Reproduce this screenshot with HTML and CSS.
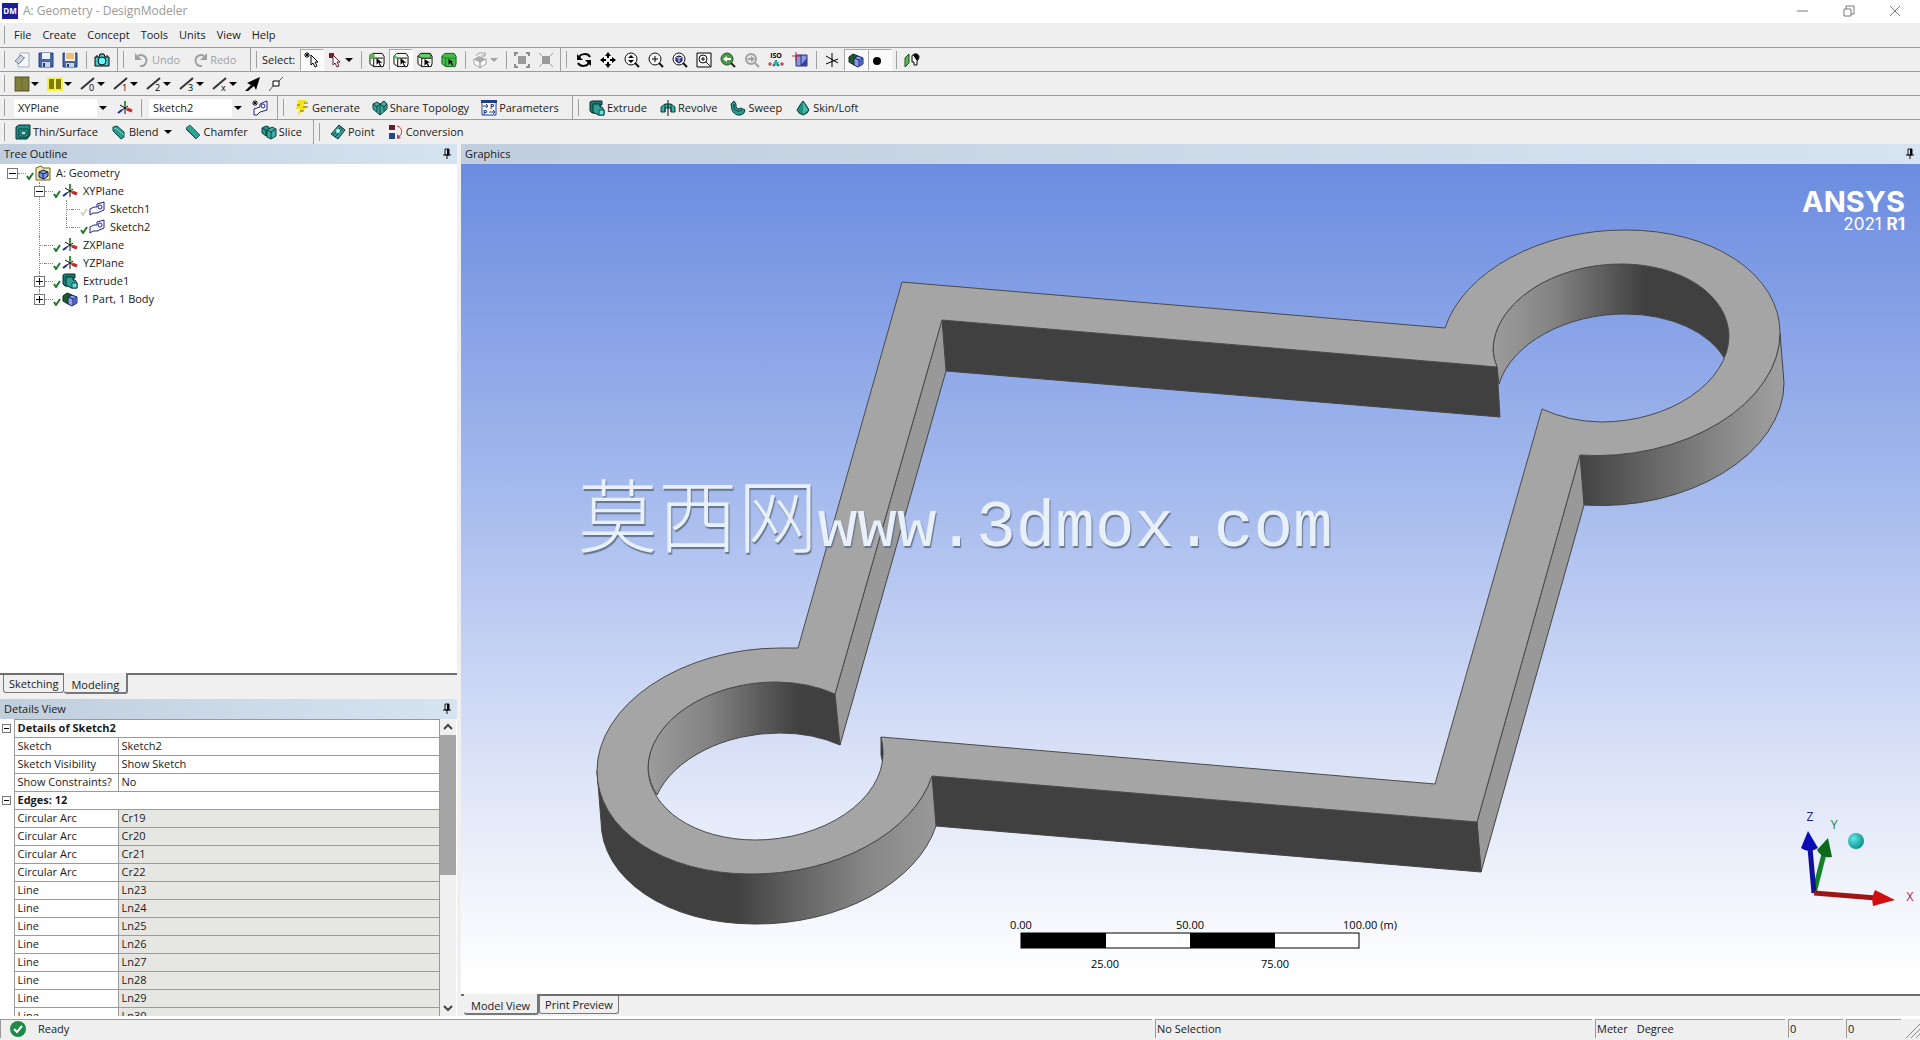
FILE: index.html
```
<!DOCTYPE html>
<html lang="en">

<head>
    <meta charset="UTF-8">
    <meta name="viewport" content="width=device-width, initial-scale=1.0">
    <title>A: Geometry - DesignModeler</title>
    <link rel="stylesheet" href="styles.css">
</head>

<body>
    <!-- Icon sprite -->
    <svg class="sprite" aria-hidden="true">
        <symbol id="i-new" viewBox="0 0 16 16"><path d="M6 1h9v14H4V8z" fill="#f4f6fa" stroke="#a9afba"/><path d="M1 9l6-6 3 3-5 6z" fill="#cdd3de" stroke="#7b8494"/><path d="M5 12l6-7" stroke="#99a" /></symbol>
        <symbol id="i-save" viewBox="0 0 16 16"><path d="M1 1h14v14H1z" fill="#4668a8" stroke="#20407c"/><path d="M4 1h8v6H4z" fill="#eef3fb"/><path d="M4 10h8v5H4z" fill="#c9d3e6"/><path d="M5 11h2v4H5z" fill="#20407c"/></symbol>
        <symbol id="i-saveas" viewBox="0 0 16 16"><path d="M1 1h14v14H1z" fill="#4668a8" stroke="#20407c"/><path d="M3 0h10v9H3z" fill="#fff4d8"/><path d="M4 2h8M4 4h8M4 6h8" stroke="#d8862c"/><path d="M4 11h8v4H4z" fill="#c9d3e6"/><path d="M5 12h2v3H5z" fill="#20407c"/></symbol>
        <symbol id="i-camera" viewBox="0 0 16 16"><path d="M1 5h4l1-3h4l1 3h4v9H1z" fill="#55c6d0" stroke="#000"/><circle cx="8" cy="9" r="4" fill="#60ffff" stroke="#000"/><path d="M3 3v2M13 3v2" stroke="#000"/></symbol>
        <symbol id="i-undo" viewBox="0 0 16 16"><path d="M4 4a5.500 5.500 0 1 1 2 10" fill="none" stroke="#a0a0a0" stroke-width="2"/><path d="M1 1v7h7z" fill="#a0a0a0"/></symbol>
        <symbol id="i-redo" viewBox="0 0 16 16"><path d="M12 4a5.500 5.500 0 1 0-2 10" fill="none" stroke="#a0a0a0" stroke-width="2"/><path d="M15 1v7H8z" fill="#a0a0a0"/></symbol>
        <symbol id="i-cursor" viewBox="0 0 16 16"><path d="M3 0v6M0 3h6M1 1l4 4M5 1L1 5" stroke="#000"/><path d="M7 3v10l2-2 2 4 2-1-2-4h3z" fill="#fff" stroke="#000"/></symbol>
        <symbol id="i-pick" viewBox="0 0 16 16"><path d="M1 1h5v5H1z" fill="#7a1730"/><path d="M5 3v10l2-2 2 4 2-1-2-4h3z" fill="#fff" stroke="#5c1a2a"/></symbol>
        <g id="cube-lines"><path d="M1 4l3-3h10l2 3v8l-1 3H5l-4-3z" fill="#f6f6f2" stroke="#000"/><path d="M1 4l4 2h10M5 6v9" stroke="#000" fill="none"/></g>
        <symbol id="i-vertex" viewBox="0 0 17 16"><use href="#cube-lines"/><circle cx="3" cy="4" r="3" fill="#5fae55"/><path d="M8 6v7l2-2 2 4 1-1-2-3h3z"/></symbol>
        <symbol id="i-edge" viewBox="0 0 17 16"><use href="#cube-lines"/><path d="M1 4l4 2" stroke="#4dbb4d" stroke-width="2"/><path d="M8 6v7l2-2 2 4 1-1-2-3h3z"/></symbol>
        <symbol id="i-face" viewBox="0 0 17 16"><use href="#cube-lines"/><path d="M1 4l3-3h10l1 5H5z" fill="#5fd05f" stroke="#000" stroke-width=".6"/><path d="M8 7v7l2-2 2 3 1-1-2-3h3z"/></symbol>
        <symbol id="i-body" viewBox="0 0 17 16"><path d="M1 4l3-3h10l2 3v8l-1 3H5l-4-3z" fill="#45bd4a" stroke="#0b5a14"/><path d="M1 4l4 2h10M5 6v9" stroke="#0b5a14" fill="none" stroke-width=".7"/><path d="M8 7v6l2-2 2 3 1-1-2-3h2z"/></symbol>
        <symbol id="i-graycube" viewBox="0 0 16 16"><path d="M1 7l6 3v6l-6-4zM7 10l6-3v5l-6 4z" fill="#fff" stroke="#a0a0a0"/><path d="M1 7l5-3 7 3-6 3z" fill="#aaa"/><path d="M3 4c2-4 7-4 9-1M12 0v4H8" fill="none" stroke="#a0a0a0"/></symbol>
        <symbol id="i-expand" viewBox="0 0 16 16"><path d="M4 4h8v8H4z" fill="#9a9a9a"/><path d="M1 4V1h3M12 1h3v3M15 12v3h-3M4 15H1v-3" fill="none" stroke="#8c8c8c" stroke-width="2"/></symbol>
        <symbol id="i-shrink" viewBox="0 0 16 16"><path d="M4 4h8v8H4z" fill="#9a9a9a"/><path d="M1 1l3 3M15 1l-3 3M15 15l-3-3M1 15l3-3" stroke="#9a9a9a" stroke-width="1"/></symbol>
        <symbol id="i-rotate" viewBox="0 0 16 16"><path d="M3 6c1-5 9-5 11-1M13 10c-1 5-9 5-11 1" fill="none" stroke="#000" stroke-width="2"/><path d="M1 2v6h6zM15 14V8H9z"/></symbol>
        <symbol id="i-pan" viewBox="0 0 16 16"><path d="M8 3v3M8 10v3M3 8h3M10 8h3" stroke="#000" stroke-width="2"/><path d="M8 0l3 4H5zM8 16l3-4H5zM0 8l4-3v6zM16 8l-4-3v6z"/></symbol>
        <g id="lens"><circle cx="7" cy="7" r="6" fill="#f6f6f6" stroke="#111"/><path d="M11 11l4 4" stroke="#111" stroke-width="2"/></g>
        <symbol id="i-zoom" viewBox="0 0 16 16"><use href="#lens"/><path d="M7 3l3 3H4zM7 11l3-3H4z"/></symbol>
        <symbol id="i-zoomin" viewBox="0 0 16 16"><use href="#lens"/><path d="M7 4v6M4 7h6" stroke="#000" stroke-width="1"/></symbol>
        <symbol id="i-fit" viewBox="0 0 16 16"><use href="#lens"/><path d="M4 5l3-1 3 1v4l-3 2-3-2z" fill="#4a4ab0" stroke="#113"/><path d="M4 5l3 1 3-1M7 6v4" stroke="#cfd0ff" fill="none"/></symbol>
        <symbol id="i-box" viewBox="0 0 16 16"><path d="M1 1h14v14H1z" fill="#f6f6f6" stroke="#000"/><circle cx="7" cy="7" r="4" fill="none" stroke="#111"/><path d="M10 10l4 4M7 5v4M5 7h4" stroke="#111"/></symbol>
        <symbol id="i-prev" viewBox="0 0 16 16"><circle cx="7" cy="7" r="6" fill="#4a9b48" stroke="#1f5a22"/><path d="M11 11l4 4" stroke="#222" stroke-width="2"/><path d="M3 7l4-3v2h4v2H7v2z" fill="#fff"/></symbol>
        <symbol id="i-next" viewBox="0 0 16 16"><circle cx="7" cy="7" r="5" fill="#e6e6e6" stroke="#a0a0a0" stroke-width="2"/><path d="M11 11l4 4" stroke="#a0a0a0" stroke-width="2"/><path d="M11 7L7 4v2H4v2h3v2z" fill="#a0a0a0"/></symbol>
        <symbol id="i-lookat" viewBox="0 0 16 16"><path d="M4 3h11v11H4z" fill="#8a98e0" stroke="#2b2f80"/><path d="M8 14l7-8v8z" fill="#34409a"/><path d="M4 0v9M0 4h9" stroke="#b03040"/><path d="M9 3v11" stroke="#2b2f80"/></symbol>
        <symbol id="i-blackaxis" viewBox="0 0 16 16"><path d="M8 1v14M2 4l12 7M2 12l12-5" stroke="#000"/></symbol>
        <symbol id="i-parts" viewBox="0 0 16 16"><path d="M1 5l4-3 5 2v7l-4 2-5-3z" fill="#1d5a2c" stroke="#0b2a12"/><path d="M6 6l4-2 5 2v6l-5 3-4-2z" fill="#8aa0ea" stroke="#14205a"/><path d="M6 6l5 2 4-2M11 8v6" fill="none" stroke="#14205a"/><path d="M11 8l4-2v6l-4 2z" fill="#4a5fc0"/></symbol>
        <symbol id="i-dot" viewBox="0 0 16 16"><circle cx="5" cy="9" r="4"/></symbol>
        <symbol id="i-headview" viewBox="0 0 16 16"><path d="M1 6l4-4v9l-4 4z" fill="#5cb75c" stroke="#184a18"/><path d="M8 4c1-3 7-3 7 1 0 3-2 3-2 5v3h-3v-3H8V7z" fill="#fff" stroke="#000"/><path d="M9 3c2-2 6-1 6 2l-2 4-2-3z"/></symbol>
        <symbol id="i-olive" viewBox="0 0 14 14"><path d="M1 1h12v12H1z" fill="#80803c" stroke="#55551f"/><path d="M7 1v12" stroke="#6b6b2c"/></symbol>
        <symbol id="i-yellow" viewBox="0 0 16 16"><path d="M0 1h16v14H0z" fill="#f4f43c"/><path d="M2 3h5v10H2zM9 3h5v10H9z" fill="#7d7a12"/></symbol>
        <symbol id="i-line" viewBox="0 0 16 16"><path d="M1 13L14 2" stroke="#333" stroke-width="2"/></symbol>
        <symbol id="i-arrow" viewBox="0 0 16 16"><path d="M0 15l6-6-4-2 13-6-4 13-2-4-6 5z"/></symbol>
        <symbol id="i-node" viewBox="0 0 16 16"><path d="M4 5h6v5H4z" fill="#fff" stroke="#000"/><path d="M10 5l4-4M4 10l-4 5" stroke="#555"/></symbol>
        <symbol id="i-axis" viewBox="0 0 16 16"><path d="M8 14V4M3 5l10 6M2 12l9-6" stroke="#111" stroke-width="1"/><path d="M8 6V1" stroke="#2c9a3a" stroke-width="2"/><path d="M10 9l5 2" stroke="#c22c2c" stroke-width="3"/><path d="M1 13l4-3" stroke="#202a90" stroke-width="2"/></symbol>
        <symbol id="i-newsketch" viewBox="0 0 16 16"><path d="M3 0v6M0 3h6M1 1l4 4M5 1L1 5" stroke="#111"/><path d="M2 15V9l6-2V4l7-3v9l-7 2-3 3z" fill="#fff" stroke="#20208a"/><circle cx="11" cy="6" r="2" fill="none" stroke="#20208a"/></symbol>
        <symbol id="i-sketch" viewBox="0 0 16 16"><path d="M1 14V8l4-2h3V3l7-2v8l-7 3H4z" fill="#fff" stroke="#20208a"/><circle cx="11" cy="6" r="2" fill="none" stroke="#20208a"/></symbol>
        <symbol id="i-generate" viewBox="0 0 16 16"><path d="M4 0h9L9 6h5L3 16l3-7H2z" fill="#f5e11c"/><path d="M10 3h4M9 7h5M6 11h4M3 5h3" stroke="#776a10"/></symbol>
        <symbol id="i-share" viewBox="0 0 16 16"><path d="M1 4l4-2 3 2 4-3 3 3v5l-7 6-7-6z" fill="#3fa79d" stroke="#0c3f3c"/><path d="M8 4v11M1 4l4 3 3-3 4 3 3-3M5 7v5M12 7v4" fill="none" stroke="#0c3f3c"/></symbol>
        <symbol id="i-extrude" viewBox="0 0 16 16"><path d="M1 2l2-1h10v4h-2v8H3l-2-2z" fill="#1b7a72" stroke="#082f2d"/><path d="M4 4h7v3h2l2 3v5H9l-3-2H4z" fill="#2fa096" stroke="#082f2d"/><path d="M10 10h5v5h-5z" fill="#66e0dc" stroke="#0b4a4a"/></symbol>
        <symbol id="i-revolve" viewBox="0 0 16 16"><path d="M1 12V7l4-3h6l4 3v5h-4V8H5v4z" fill="#3fb0a5" stroke="#083f3c"/><path d="M8 0v16" stroke="#111"/><path d="M5 8v4M11 8v4M5 4v4M11 4v4" stroke="#083f3c"/></symbol>
        <symbol id="i-sweep" viewBox="0 0 16 16"><path d="M1 4l3-3 2 3v3c1 2 3 2 5 1l4 2-1 3c-4 4-10 2-12-3z" fill="#2c9c92" stroke="#083f3c"/><path d="M4 4v4c1 3 4 4 8 2" fill="none" stroke="#083f3c"/></symbol>
        <symbol id="i-skin" viewBox="0 0 16 16"><path d="M8 1l3 4 3 5-2 3-4 2-4-2-2-3 3-5z" fill="#1f8f80" stroke="#083f3c"/><path d="M8 2v12l5-4-3-5z" fill="#48b8a6"/></symbol>
        <symbol id="i-thin" viewBox="0 0 16 16"><path d="M1 3l3-2h11v10l-3 4H1z" fill="#1f8f86" stroke="#082f2d"/><path d="M4 5h9v8H4z" fill="#2fb3a8" stroke="#082f2d"/><path d="M6 7h5v4H6z" fill="#9bdfd8" stroke="#082f2d"/></symbol>
        <symbol id="i-blend" viewBox="0 0 16 16"><path d="M2 3l4-1 7 6v5l-3 2-8-8z" fill="#2a9a90" stroke="#0b4a46"/><path d="M3 4l3 1 7 6" fill="none" stroke="#7fd6cf"/></symbol>
        <symbol id="i-chamfer" viewBox="0 0 16 16"><path d="M1 4l4-3 10 10-4 4z" fill="#2aa396" stroke="#2f6a66"/><path d="M1 5l10 10" stroke="#0b4a46"/></symbol>
        <symbol id="i-slice" viewBox="0 0 16 16"><path d="M1 4l4-2 3 1v8l-3 1-4-3z" fill="#2c9c92" stroke="#083f3c"/><path d="M6 6l5-3 4 2v7l-5 3-4-2z" fill="#3fb0a5" stroke="#083f3c"/><path d="M6 6l4 2 5-3M10 8v7M1 4l4 2v5" fill="none" stroke="#083f3c"/></symbol>
        <symbol id="i-point" viewBox="0 0 16 16"><path d="M9 1l6 5-7 9-7-5z" fill="#3a9a90" stroke="#0c3f3c"/><path d="M3 11l8-8M5 13l8-9" stroke="#0c3f3c"/><circle cx="8" cy="7" r="2" fill="#bff"/></symbol>
        <symbol id="i-conv" viewBox="0 0 16 16"><path d="M1 1h6v5H1z" fill="#6a1b2e"/><path d="M1 9h6v6H1z" fill="#214a80"/><path d="M9 2c6 1 6 9 1 11" fill="none" stroke="#c23a4a"/><path d="M9 10v5l4-1z" fill="#c23a4a"/></symbol>
        <symbol id="i-root" viewBox="0 0 16 16"><path d="M1 3l5-2 2 2h7v12H1z" fill="#f3e9a0" stroke="#6b6320"/><path d="M4 7l4-2 5 2v4l-4 3-5-2z" fill="#7c96e0" stroke="#14205a"/><path d="M4 7l4 2 5-2M8 9v5" fill="none" stroke="#14205a"/></symbol>
        <symbol id="i-check" viewBox="0 0 8 8"><path d="M1 4l2 3 4-6" fill="none" stroke="currentColor" stroke-width="2"/></symbol>
        <symbol id="i-pin" viewBox="0 0 8 12"><path d="M2 1h4v6H2zM0 7h8M4 7v4" fill="none" stroke="#111"/><path d="M4 1h2v6H4z"/></symbol>
    </svg>

    <header class="titlebar">
        <svg class="app-icon" viewBox="0 0 16 16"><rect width="16" height="16" fill="#1c1c9c"/><text class="app-text" x="8" y="11" text-anchor="middle">DM</text></svg>
        <h1>A: Geometry - DesignModeler</h1>
        <div class="window-buttons">
            <button aria-label="Minimize"><svg viewBox="0 0 12 12"><path d="M0 6h11" stroke="#777"/></svg></button>
            <button aria-label="Restore"><svg viewBox="0 0 12 12"><path d="M1 4h7v7H1zM3 4V1h8v8H8" fill="none" stroke="#777"/></svg></button>
            <button aria-label="Close"><svg viewBox="0 0 12 12"><path d="M1 1l10 10M11 1L1 11" stroke="#777"/></svg></button>
        </div>
    </header>

    <!-- Menu and toolbars -->
    <nav class="bar menu">
        <button>File</button>
        <button>Create</button>
        <button>Concept</button>
        <button>Tools</button>
        <button>Units</button>
        <button>View</button>
        <button>Help</button>
    </nav>

    <div class="bar">
        <div class="band band-file">
            <button class="icon-btn" aria-label="New"><svg><use href="#i-new"/></svg></button>
            <button class="icon-btn" aria-label="Save"><svg><use href="#i-save"/></svg></button>
            <button class="icon-btn" aria-label="Save as"><svg><use href="#i-saveas"/></svg></button>
            <span class="sep"></span>
            <button class="icon-btn" aria-label="Image capture"><svg><use href="#i-camera"/></svg></button>
        </div>
        <div class="band band-undo">
            <button class="tool" disabled><svg><use href="#i-undo"/></svg>Undo</button>
            <button class="tool" disabled><svg><use href="#i-redo"/></svg>Redo</button>
        </div>
        <div class="band band-select">
            <span class="select-label">Select:</span>
            <button class="icon-btn pressed" aria-label="New selection"><svg><use href="#i-cursor"/></svg></button>
            <button class="icon-btn drop" aria-label="Select mode"><svg><use href="#i-pick"/></svg></button>
            <span class="sep"></span>
            <button class="icon-btn" aria-label="Vertices"><svg><use href="#i-vertex"/></svg></button>
            <button class="icon-btn pressed" aria-label="Edges"><svg><use href="#i-edge"/></svg></button>
            <button class="icon-btn" aria-label="Faces"><svg><use href="#i-face"/></svg></button>
            <button class="icon-btn" aria-label="Bodies"><svg><use href="#i-body"/></svg></button>
            <span class="sep"></span>
            <button class="icon-btn drop" aria-label="Extend selection" disabled><svg><use href="#i-graycube"/></svg></button>
            <span class="sep"></span>
            <button class="icon-btn" aria-label="Expand" disabled><svg><use href="#i-expand"/></svg></button>
            <button class="icon-btn" aria-label="Shrink" disabled><svg><use href="#i-shrink"/></svg></button>
        </div>
        <div class="band band-last">
            <button class="icon-btn" aria-label="Rotate"><svg><use href="#i-rotate"/></svg></button>
            <button class="icon-btn" aria-label="Pan"><svg><use href="#i-pan"/></svg></button>
            <button class="icon-btn" aria-label="Zoom"><svg><use href="#i-zoom"/></svg></button>
            <button class="icon-btn" aria-label="Box zoom"><svg><use href="#i-zoomin"/></svg></button>
            <button class="icon-btn" aria-label="Zoom to fit"><svg><use href="#i-fit"/></svg></button>
            <button class="icon-btn" aria-label="Magnifier"><svg><use href="#i-box"/></svg></button>
            <button class="icon-btn" aria-label="Previous view"><svg><use href="#i-prev"/></svg></button>
            <button class="icon-btn" aria-label="Next view" disabled><svg><use href="#i-next"/></svg></button>
            <button class="icon-btn" aria-label="Isometric view"><svg viewBox="0 0 16 16"><text class="iso-text" x="8" y="6" text-anchor="middle">ISO</text><path d="M8 8v3l-3 3M8 11l3 3" stroke="#0a7a72" stroke-width="2" fill="none"/><path d="M0 12h4M2 10v4M12 12h4M14 10v4" stroke="#a22"/><path d="M8 8l3 3-3 3-3-3z" fill="#39b0a5"/></svg></button>
            <button class="icon-btn" aria-label="Look at"><svg><use href="#i-lookat"/></svg></button>
            <span class="sep"></span>
            <button class="icon-btn" aria-label="Display plane"><svg><use href="#i-blackaxis"/></svg></button>
            <button class="icon-btn pressed" aria-label="Display model"><svg><use href="#i-parts"/></svg></button>
            <button class="icon-btn pressed" aria-label="Display points"><svg><use href="#i-dot"/></svg></button>
            <span class="sep"></span>
            <button class="icon-btn" aria-label="Look at face"><svg><use href="#i-headview"/></svg></button>
        </div>
    </div>

    <div class="bar">
        <div class="band band-last">
            <button class="icon-btn drop" aria-label="Face color"><svg><use href="#i-olive"/></svg></button>
            <button class="icon-btn drop" aria-label="Edge color"><svg><use href="#i-yellow"/></svg></button>
            <button class="icon-btn drop" aria-label="Free edges"><svg viewBox="0 0 16 16"><use href="#i-line"/><text class="edge-num" x="9" y="15">0</text></svg></button>
            <button class="icon-btn drop" aria-label="Single edges"><svg viewBox="0 0 16 16"><use href="#i-line"/><text class="edge-num" x="9" y="15">1</text></svg></button>
            <button class="icon-btn drop" aria-label="Double edges"><svg viewBox="0 0 16 16"><use href="#i-line"/><text class="edge-num" x="9" y="15">2</text></svg></button>
            <button class="icon-btn drop" aria-label="Triple edges"><svg viewBox="0 0 16 16"><use href="#i-line"/><text class="edge-num" x="9" y="15">3</text></svg></button>
            <button class="icon-btn drop" aria-label="Multiple edges"><svg viewBox="0 0 16 16"><use href="#i-line"/><text class="edge-num" x="9" y="15">x</text></svg></button>
            <button class="icon-btn" aria-label="Edge direction"><svg><use href="#i-arrow"/></svg></button>
            <button class="icon-btn" aria-label="Show vertices"><svg><use href="#i-node"/></svg></button>
        </div>
    </div>

    <div class="bar">
        <div class="band band-plane">
            <span class="combo"><select aria-label="Active plane"><option>XYPlane</option><option>ZXPlane</option><option>YZPlane</option></select></span>
            <button class="icon-btn" aria-label="New plane"><svg><use href="#i-axis"/></svg></button>
            <span class="sep"></span>
            <span class="combo"><select aria-label="Active sketch"><option>Sketch2</option><option>Sketch1</option></select></span>
            <button class="icon-btn" aria-label="New sketch"><svg><use href="#i-newsketch"/></svg></button>
        </div>
        <div class="band band-generate">
            <button class="tool"><svg><use href="#i-generate"/></svg>Generate</button>
            <button class="tool"><svg><use href="#i-share"/></svg>Share Topology</button>
            <button class="tool"><svg viewBox="0 0 16 16"><path d="M1 1h14v14H1z" fill="#fff" stroke="#1e3c8c"/><path d="M0 0h16v3H0z" fill="#1e3c8c"/><text class="param-text" x="9" y="9">P</text><text class="param-text" x="2" y="15">P</text><path d="M2 6h5M8 12h5M5 4l2 2-2 2M12 10l2 2-2 2" stroke="#1e3c8c" fill="none"/></svg>Parameters</button>
        </div>
        <div class="band band-last band-features">
            <button class="tool"><svg><use href="#i-extrude"/></svg>Extrude</button>
            <button class="tool"><svg><use href="#i-revolve"/></svg>Revolve</button>
            <button class="tool"><svg><use href="#i-sweep"/></svg>Sweep</button>
            <button class="tool"><svg><use href="#i-skin"/></svg>Skin/Loft</button>
        </div>
    </div>

    <div class="bar bar-bottom">
        <div class="band band-thin">
            <button class="tool"><svg><use href="#i-thin"/></svg>Thin/Surface</button>
            <button class="tool drop"><svg><use href="#i-blend"/></svg>Blend</button>
            <button class="tool"><svg><use href="#i-chamfer"/></svg>Chamfer</button>
            <button class="tool"><svg><use href="#i-slice"/></svg>Slice</button>
        </div>
        <div class="band band-last band-features">
            <button class="tool"><svg><use href="#i-point"/></svg>Point</button>
            <button class="tool"><svg><use href="#i-conv"/></svg>Conversion</button>
        </div>
    </div>

    <main class="workspace">
        <aside class="sidebar">
            <!-- Tree Outline -->
            <div class="pane-title"><h2>Tree Outline</h2><svg><use href="#i-pin"/></svg></div>
            <div class="tree">
                <ul class="root">
                    <li>
                        <div class="node"><button class="toggle" aria-label="Collapse"></button><i class="dots"></i><svg class="check"><use href="#i-check"/></svg><svg><use href="#i-root"/></svg><span>A: Geometry</span></div>
                        <ul>
                            <li>
                                <div class="node"><button class="toggle" aria-label="Collapse"></button><i class="dots"></i><svg class="check"><use href="#i-check"/></svg><svg><use href="#i-axis"/></svg><span>XYPlane</span></div>
                                <ul>
                                    <li><div class="node"><i class="stub"></i><i class="dots"></i><svg class="check faded"><use href="#i-check"/></svg><svg><use href="#i-sketch"/></svg><span>Sketch1</span></div></li>
                                    <li><div class="node"><i class="stub"></i><i class="dots"></i><svg class="check"><use href="#i-check"/></svg><svg><use href="#i-sketch"/></svg><span>Sketch2</span></div></li>
                                </ul>
                            </li>
                            <li><div class="node"><i class="stub"></i><i class="dots"></i><svg class="check"><use href="#i-check"/></svg><svg><use href="#i-axis"/></svg><span>ZXPlane</span></div></li>
                            <li><div class="node"><i class="stub"></i><i class="dots"></i><svg class="check"><use href="#i-check"/></svg><svg><use href="#i-axis"/></svg><span>YZPlane</span></div></li>
                            <li><div class="node"><button class="toggle closed" aria-label="Expand"></button><i class="dots"></i><svg class="check"><use href="#i-check"/></svg><svg><use href="#i-extrude"/></svg><span>Extrude1</span></div></li>
                            <li><div class="node"><button class="toggle closed" aria-label="Expand"></button><i class="dots"></i><svg class="check"><use href="#i-check"/></svg><svg><use href="#i-parts"/></svg><span>1 Part, 1 Body</span></div></li>
                        </ul>
                    </li>
                </ul>
            </div>
            <div class="tabs tree-tabs">
                <button>Sketching</button>
                <button class="active">Modeling</button>
            </div>

            <!-- Details View -->
            <div class="pane-title"><h2>Details View</h2><svg><use href="#i-pin"/></svg></div>
            <div class="details">
                <table>
                    <tbody>
                        <tr><td class="gutter"><button class="toggle" aria-label="Collapse"></button></td><th colspan="2">Details of Sketch2</th></tr>
                        <tr><td class="gutter"></td><td class="name">Sketch</td><td>Sketch2</td></tr>
                        <tr><td class="gutter"></td><td class="name">Sketch Visibility</td><td>Show Sketch</td></tr>
                        <tr><td class="gutter"></td><td class="name">Show Constraints?</td><td>No</td></tr>
                    </tbody>
                    <tbody class="readonly">
                        <tr><td class="gutter"><button class="toggle" aria-label="Collapse"></button></td><th colspan="2">Edges: 12</th></tr>
                        <tr><td class="gutter"></td><td class="name">Circular Arc</td><td>Cr19</td></tr>
                        <tr><td class="gutter"></td><td class="name">Circular Arc</td><td>Cr20</td></tr>
                        <tr><td class="gutter"></td><td class="name">Circular Arc</td><td>Cr21</td></tr>
                        <tr><td class="gutter"></td><td class="name">Circular Arc</td><td>Cr22</td></tr>
                        <tr><td class="gutter"></td><td class="name">Line</td><td>Ln23</td></tr>
                        <tr><td class="gutter"></td><td class="name">Line</td><td>Ln24</td></tr>
                        <tr><td class="gutter"></td><td class="name">Line</td><td>Ln25</td></tr>
                        <tr><td class="gutter"></td><td class="name">Line</td><td>Ln26</td></tr>
                        <tr><td class="gutter"></td><td class="name">Line</td><td>Ln27</td></tr>
                        <tr><td class="gutter"></td><td class="name">Line</td><td>Ln28</td></tr>
                        <tr><td class="gutter"></td><td class="name">Line</td><td>Ln29</td></tr>
                        <tr><td class="gutter"></td><td class="name">Line</td><td>Ln30</td></tr>
                    </tbody>
                </table>
                <div class="scrollbar">
                    <button aria-label="Scroll up"><svg viewBox="0 0 10 10"><path d="M1 7l4-4 4 4" fill="none" stroke="#444" stroke-width="2"/></svg></button>
                    <div class="track"><div class="thumb"></div></div>
                    <button aria-label="Scroll down"><svg viewBox="0 0 10 10"><path d="M1 3l4 4 4-4" fill="none" stroke="#444" stroke-width="2"/></svg></button>
                </div>
            </div>
        </aside>

        <section class="graphics">
            <div class="pane-title"><h2>Graphics</h2><svg><use href="#i-pin"/></svg></div>
            <div class="viewport">
                <svg class="model" viewBox="461 164 1459 830">
                    <defs>
                        <linearGradient id="g-hole1" gradientUnits="userSpaceOnUse" x1="1493" y1="0" x2="1645" y2="0"><stop offset="0" stop-color="#9c9c9c"/><stop offset=".4" stop-color="#838383"/><stop offset=".8" stop-color="#555"/><stop offset="1" stop-color="#404040"/></linearGradient>
                        <linearGradient id="g-hole2" gradientUnits="userSpaceOnUse" x1="648" y1="0" x2="800" y2="0"><stop offset="0" stop-color="#9c9c9c"/><stop offset=".4" stop-color="#838383"/><stop offset=".8" stop-color="#555"/><stop offset="1" stop-color="#404040"/></linearGradient>
                        <linearGradient id="g-ring1" gradientUnits="userSpaceOnUse" x1="1583" y1="0" x2="1784" y2="0"><stop offset="0" stop-color="#444"/><stop offset=".3" stop-color="#626262"/><stop offset=".65" stop-color="#848484"/><stop offset="1" stop-color="#a0a0a0"/></linearGradient>
                        <linearGradient id="g-ring2" gradientUnits="userSpaceOnUse" x1="735" y1="0" x2="936" y2="0"><stop offset="0" stop-color="#404040"/><stop offset=".3" stop-color="#626262"/><stop offset=".65" stop-color="#868686"/><stop offset="1" stop-color="#999"/></linearGradient>
                        <radialGradient id="g-ball" cx=".35" cy=".35" r=".7"><stop offset="0" stop-color="#5fe8e4"/><stop offset="1" stop-color="#0a8f90"/></radialGradient>
                    </defs>
                    <!-- side walls -->
                    <g stroke="#444" stroke-width="1" stroke-linejoin="round">
                        <path fill="url(#g-hole1)" d="M1497 367A118 79 -6 0 1 1493 350A118 79 -6 0 1 1622 264A118 79 -6 0 1 1729 336A118 79 -6 0 1 1725 359A118 79 -6 0 0 1626 314A118 79 -6 0 0 1499 384Z"/>
                        <path fill="#404040" d="M942 320L1497 367L1500 417L946 371Z"/>
                        <path fill="url(#g-hole2)" d="M657 795A118 79 -6 0 1 648 768A118 79 -6 0 1 776 682A118 79 -6 0 1 835 694L840 745A118 79 -6 0 0 780 733A118 79 -6 0 0 657 795Z"/>
                        <path fill="#999" d="M942 320L835 694L840 745L946 371Z"/>
                        <path fill="#303030" d="M881 737A118 79 -6 0 1 883 764L881 755Z"/>
                        <path fill="url(#g-ring1)" d="M1580 455A169 112 -6 0 0 1780 333L1784 383A169 112 -6 0 1 1584 505Z"/>
                        <path fill="#999" d="M1580 455L1477 822L1481 872L1584 505Z"/>
                        <path fill="#404040" d="M932 776L1477 822L1481 872L936 826Z"/>
                        <path fill="url(#g-ring2)" d="M597 771A169 112 -6 0 0 750 874A169 112 -6 0 0 932 776L936 826A169 112 -6 0 1 754 924A169 112 -6 0 1 601 821Z"/>
                    </g>
                    <!-- top face -->
                    <path fill="#a5a5a5" fill-rule="evenodd" stroke="#4a4a4a" stroke-width="1" d="M902 282L1445 328A169 112 -6 0 1 1626 230A169 112 -6 0 1 1780 333A169 112 -6 0 1 1580 455L1477 822L932 776A169 112 -6 0 1 750 874A169 112 -6 0 1 597 771A169 112 -6 0 1 780 648L798 648Z
                        M942 320L1497 367A118 79 -6 0 1 1493 350A118 79 -6 0 1 1622 264A118 79 -6 0 1 1729 336A118 79 -6 0 1 1601 422A118 79 -6 0 1 1542 409L1435 784L881 737A118 79 -6 0 1 883 754A118 79 -6 0 1 755 840A118 79 -6 0 1 648 768A118 79 -6 0 1 776 682A118 79 -6 0 1 835 694Z"/>
                    <!-- scale -->
                    <g class="scale">
                        <rect x="1021" y="933" width="338" height="15" fill="#fff" stroke="#000"/>
                        <path d="M1021 933h85v15h-85zM1190 933h85v15h-85z"/>
                        <text x="1021" y="929">0.00</text>
                        <text x="1190" y="929">50.00</text>
                        <text x="1370" y="929">100.00 (m)</text>
                        <text x="1105" y="968">25.00</text>
                        <text x="1275" y="968">75.00</text>
                    </g>
                    <!-- axis triad -->
                    <g class="triad">
                        <path d="M1814 893L1825 850" stroke="#15802a" stroke-width="5"/>
                        <path d="M1828 838L1817 850Q1822 859 1832 857Z" fill="#0d6a1c"/>
                        <path d="M1814 893L1810 848" stroke="#10109c" stroke-width="5"/>
                        <path d="M1808 831L1801 848Q1809 854 1818 848Z" fill="#0c0cb4"/>
                        <path d="M1814 893L1876 898" stroke="#a01414" stroke-width="5"/>
                        <path d="M1895 900L1875 890Q1871 898 1873 906Z" fill="#d01010"/>
                        <circle cx="1856" cy="841" r="8" fill="url(#g-ball)"/>
                        <text x="1810" y="821" fill="#20207a">Z</text>
                        <text x="1834" y="829" fill="#1c7a50">Y</text>
                        <text x="1910" y="901" fill="#b02048">X</text>
                    </g>
                </svg>
                <p class="watermark"><span>莫西网</span>www.3dmox.com</p>
                <div class="brand"><strong>ANSYS</strong><span>2021 <b>R1</b></span></div>
            </div>
            <div class="tabs view-tabs">
                <button class="active">Model View</button>
                <button>Print Preview</button>
            </div>
        </section>
    </main>

    <footer class="status">
        <div class="cell ready"><svg viewBox="0 0 16 16"><circle cx="8" cy="8" r="8" fill="#1d8a48"/><path d="M4 8l3 3 5-6" fill="none" stroke="#fff" stroke-width="2"/></svg>Ready</div>
        <div class="cell selection">No Selection</div>
        <div class="cell units"><span>Meter</span><span>Degree</span></div>
        <div class="cell count">0</div>
        <div class="cell count">0</div>
        <svg class="grip" viewBox="0 0 16 16"><path d="M2 16L16 2M7 16l9-9M12 16l4-4" stroke="#8a8a8a" stroke-width="1"/></svg>
    </footer>
</body>

</html>
```
FILE: styles.css
```
* {
    box-sizing: border-box;
}

body {
    margin: 0;
    height: 100vh;
    display: flex;
    flex-direction: column;
    overflow: hidden;
    background: #fff;
    color: #1a1a1a;
    font-family: "Open Sans", "Noto Sans", sans-serif;
    font-size: 11px;
    line-height: 16px;
}

button,
select {
    font: inherit;
    color: inherit;
    border: 0;
    padding: 0;
    background: none;
    white-space: nowrap;
}

h1,
h2,
p,
ul {
    margin: 0;
    padding: 0;
    font: inherit;
}

svg {
    display: block;
    flex: none;
}

.sprite {
    position: absolute;
    width: 0;
    height: 0;
}

/* Title bar */
.titlebar {
    display: flex;
    align-items: center;
    height: 23px;
    padding: 0 2px 2px;
    color: #999;
    font-size: 12px;
}

.titlebar h1 {
    margin-left: 5px;
    flex: 1;
}

.app-icon {
    width: 16px;
    height: 16px;
}

.app-text {
    font-size: 8px;
    font-weight: bold;
    fill: #fff;
}

.window-buttons {
    display: flex;
}

.window-buttons button {
    display: flex;
    align-items: center;
    justify-content: center;
    width: 46px;
    height: 20px;
}

.window-buttons svg {
    width: 12px;
    height: 12px;
}

/* Toolbars */
.bar {
    display: flex;
    height: 24px;
    background: #efefef;
    border-bottom: 1px solid #9c9c9c;
    padding-left: 4px;
}

.bar.menu {
    height: 25px;
}

.bar-bottom {
    height: 24px;
    border-bottom: 0;
}

.menu::before,
.band::before {
    content: "";
    width: 1px;
    margin: 3px 5px 3px 0;
    background: #a0a0a0;
}

.menu {
    align-items: stretch;
}

.menu button {
    padding: 0 6px 0 5px;
}

.menu button:first-of-type {
    padding-left: 4px;
}

.band {
    display: flex;
    align-items: center;
    flex: none;
    border-right: 1px solid #a0a0a0;
    margin-right: 5px;
}

.band::before {
    align-self: stretch;
}

.band-last {
    border-right: 0;
}

.band-file {
    width: 114px;
}

.band-undo {
    width: 128px;
}

.band-select {
    width: 305px;
}

.band-plane {
    width: 274px;
}

.band-generate {
    width: 290px;
}

.band-thin {
    width: 310px;
}

.icon-btn {
    display: flex;
    align-items: center;
    justify-content: center;
    width: 24px;
    height: 22px;
}

.icon-btn svg,
.tool svg {
    width: 16px;
    height: 16px;
}

.pressed {
    background: #fafafa;
    border: 1px solid #aaa;
    border-right-color: #fff;
    border-bottom-color: #fff;
}

.drop {
    gap: 1px;
}

.icon-btn.drop {
    width: 33px;
}

.drop::after,
.combo::after {
    content: "";
    border: 4px solid transparent;
    border-top-color: #000;
    border-bottom: 0;
}

.drop:disabled::after {
    border-top-color: #a0a0a0;
}

.sep {
    width: 1px;
    height: 18px;
    margin: 0 3px 0 4px;
    background: #a0a0a0;
}

.tool {
    display: flex;
    align-items: center;
    gap: 2px;
    height: 22px;
    padding: 0 7px 0 5px;
}

.band-features .tool,
.band-thin .tool {
    padding-right: 8px;
}

.tool.drop::after {
    margin-left: 4px;
}

.tool:disabled {
    color: #a0a0a0;
}

.select-label {
    padding-right: 5px;
}

.combo {
    display: flex;
    align-items: center;
    position: relative;
    margin: 0 2px 0 4px;
}

.combo::after {
    position: absolute;
    right: 4px;
    pointer-events: none;
}

.combo select {
    appearance: none;
    width: 97px;
    height: 18px;
    padding-left: 4px;
    border-right: 14px solid #efefef;
    background: #fff;
}

.iso-text {
    font-size: 7px;
    font-weight: bold;
}

.edge-num {
    font-size: 9px;
}

.param-text {
    font-size: 7px;
    font-weight: bold;
    fill: #1e3c8c;
}

/* Panes */
.workspace {
    flex: 1;
    display: flex;
    gap: 4px;
    min-height: 0;
    background: #f0f0f0;
}

.sidebar {
    flex: 0 0 457px;
    display: flex;
    flex-direction: column;
    min-height: 0;
}

.pane-title {
    display: flex;
    align-items: center;
    justify-content: space-between;
    flex: none;
    height: 20px;
    padding: 0 6px 0 4px;
    background: linear-gradient(90deg, #c1cedd, #d6e4f2);
}

.pane-title svg {
    width: 8px;
    height: 12px;
}

.tree {
    flex: 509;
    min-height: 0;
    background: #fff;
    overflow: hidden;
}

.tree ul {
    list-style: none;
    margin-left: 27px;
}

.tree .root {
    margin-left: 7px;
}

.tree li {
    position: relative;
}

.tree li li::before {
    content: "";
    position: absolute;
    left: 5px;
    top: 0;
    bottom: 0;
    border-left: 1px dotted #888;
}

.tree li li:last-child::before {
    bottom: auto;
    height: 10px;
}

.node {
    display: flex;
    align-items: center;
    height: 18px;
}

.node svg {
    width: 16px;
    height: 16px;
}

.node .check {
    width: 8px;
    height: 8px;
    margin: 6px 1px 0 0;
    color: #1f7a2c;
}

.node .check.faded {
    color: #ccd8cc;
}

.node span {
    padding-left: 5px;
}

.dots {
    width: 8px;
    border-top: 1px dotted #888;
}

.stub {
    width: 6px;
    margin-left: 5px;
    border-top: 1px dotted #888;
}

.toggle {
    position: relative;
    width: 11px;
    height: 11px;
    border: 1px solid #777;
    background: linear-gradient(#000, #000) center / 7px 1px no-repeat #fff;
}

.toggle.closed {
    background: linear-gradient(#000, #000) center / 7px 1px no-repeat, linear-gradient(#000, #000) center / 1px 7px no-repeat #fff;
}

.tabs {
    display: flex;
    align-items: flex-start;
    flex: none;
    padding-left: 3px;
    border-top: 2px solid #6e6e6e;
    background: #f0f0f0;
}

.tabs button {
    height: 18px;
    padding: 0 5px;
    border: 1px solid #777;
    border-top: 0;
    border-radius: 0 0 3px 3px;
}

.tabs .active {
    height: 21px;
    margin-top: -2px;
    padding: 4px 7px 0;
    border-width: 0 2px 2px 0;
    background: #f0f0f0;
}

.tree-tabs {
    height: 26px;
}

.view-tabs {
    height: 22px;
}

/* Details */
.details {
    display: flex;
    flex: 297;
    min-height: 0;
    background: #fff;
    overflow: hidden;
}

.details table {
    flex: 1;
    align-self: flex-start;
    border-collapse: collapse;
    table-layout: fixed;
}

.details th,
.details td {
    height: 18px;
    padding: 0 0 2px 3px;
    border: 1px solid #9a9a9a;
    line-height: 15px;
    text-align: left;
    white-space: nowrap;
}

.details .gutter {
    width: 14px;
    padding: 0 0 0 2px;
    border-width: 0 1px 0 0;
}

.details .name {
    width: 104px;
}

.details .toggle {
    display: block;
    width: 9px;
    height: 9px;
    background-size: 5px 1px;
}

.readonly td:last-child {
    background: #e6e6e3;
}

.scrollbar {
    display: flex;
    flex-direction: column;
    width: 16px;
    margin-right: 1px;
    background: #f0f0f0;
}

.scrollbar button {
    display: flex;
    align-items: center;
    justify-content: center;
    height: 16px;
}

.scrollbar svg {
    width: 10px;
    height: 10px;
}

.track {
    flex: 1;
}

.thumb {
    height: 53%;
    background: #a6a6a6;
}

/* Graphics */
.graphics {
    flex: 1;
    display: flex;
    flex-direction: column;
    min-width: 0;
}

.viewport {
    position: relative;
    flex: 1;
    min-height: 0;
    background: linear-gradient(#6b8ce0, #a9bdee 42%, #dfe6f8 75%, #fff 98%);
}

.model {
    width: 100%;
    height: 100%;
}

.scale text,
.triad text {
    text-anchor: middle;
}

.triad text {
    font-size: 12px;
}

.watermark {
    position: absolute;
    left: 8%;
    top: 37%;
    display: flex;
    align-items: baseline;
    color: #e8f0fa;
    font-family: "Liberation Mono", "Noto Sans CJK SC", monospace;
    font-size: 66px;
    line-height: 80px;
    text-shadow: 1px 2px 1px #66758f;
    white-space: nowrap;
}

.watermark span {
    font-family: "Noto Sans CJK SC", sans-serif;
    font-size: 80px;
    font-weight: 300;
}

.brand {
    position: absolute;
    right: 15px;
    top: 24px;
    display: flex;
    flex-direction: column;
    align-items: flex-end;
    color: #fff;
    font-family: Inter, sans-serif;
    font-size: 17px;
    line-height: 16px;
}

.brand strong {
    font-size: 29px;
    line-height: 28px;
}

/* Status bar */
.status {
    display: flex;
    flex: none;
    gap: 3px;
    height: 24px;
    padding-bottom: 2px;
    border-top: 3px solid #fff;
    background: #efefef;
}

.cell {
    display: flex;
    align-items: center;
    padding-left: 1px;
    border-top: 1px solid #999;
    border-left: 1px solid #999;
}

.ready {
    flex: 1;
    gap: 12px;
    padding-left: 9px;
}

.ready svg {
    width: 16px;
    height: 16px;
}

.selection {
    width: 437px;
}

.units {
    width: 190px;
    gap: 9px;
}

.count {
    width: 55px;
}

.grip {
    width: 16px;
    height: 16px;
    align-self: flex-end;
}
```
